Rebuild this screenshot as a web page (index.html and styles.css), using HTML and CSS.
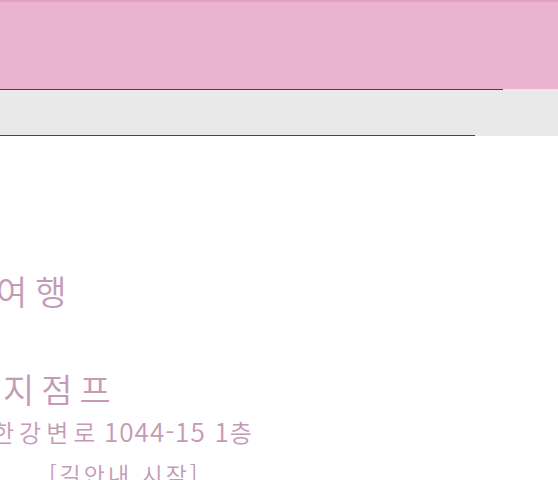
FILE: index.html
```html
<!DOCTYPE html>
<html lang="ko">
<head>
<meta charset="utf-8">
<link rel="stylesheet" href="styles.css">
</head>
<body>
<header class="top"></header>
<nav class="bar">
  <div class="rule rule-top"></div>
  <div class="bar-body"></div>
  <div class="rule rule-bottom"></div>
</nav>
<main class="content">
  <h1 class="title title-trip">여행</h1>
  <h2 class="title title-place">지점프</h2>
  <p class="address"><span class="addr-word">한강변로</span> <span class="addr-num">1044-15</span> <span class="addr-floor"><span class="addr-num">1</span>층</span></p>
  <p class="guide">[길안내 시작]</p>
</main>
</body>
</html>
```
FILE: styles.css
```css
html, body {
  margin: 0;
  padding: 0;
  background: #ffffff;
  overflow: hidden;
}
body {
  width: 558px;
  height: 480px;
  font-family: "Noto Sans CJK KR", "Noto Sans", sans-serif;
  font-weight: 350;
  color: #c49ab6;
}
.top {
  height: 87px;
  background: #eab3cf;
  border-top: 2px solid #e5a0bd;
}
.bar {
  display: flex;
  flex-direction: column;
  height: 47px;
  background: #e9e9e9;
}
.rule {
  height: 1px;
  background: #46464a;
}
.rule-top { width: 503px; }
.rule-bottom { width: 475px; }
.bar-body { flex: 1; }
.content {
  display: flex;
  flex-direction: column;
  align-items: flex-start;
}
.title {
  margin: 0;
  font-weight: 350;
  font-size: 34px;
  line-height: 40px;
  white-space: nowrap;
}
.title-trip {
  margin-top: 135px;
  margin-left: -4px;
  letter-spacing: 8px;
}
.title-place {
  margin-top: 58px;
  margin-left: 3px;
  letter-spacing: 7px;
}
.address {
  margin: 8px 0 0 -8px;
  font-size: 24px;
  line-height: 28px;
  height: 28px;
  white-space: nowrap;
  word-spacing: -3px;
}
.addr-word { letter-spacing: 5px; }
.addr-num {
  font-size: 26px;
  letter-spacing: 1px;
}
.addr-floor {
  margin-left: 5px;
}
.guide {
  margin: 16px 0 0 49px;
  font-size: 23px;
  line-height: 26px;
  letter-spacing: 3px;
  white-space: nowrap;
}
```
